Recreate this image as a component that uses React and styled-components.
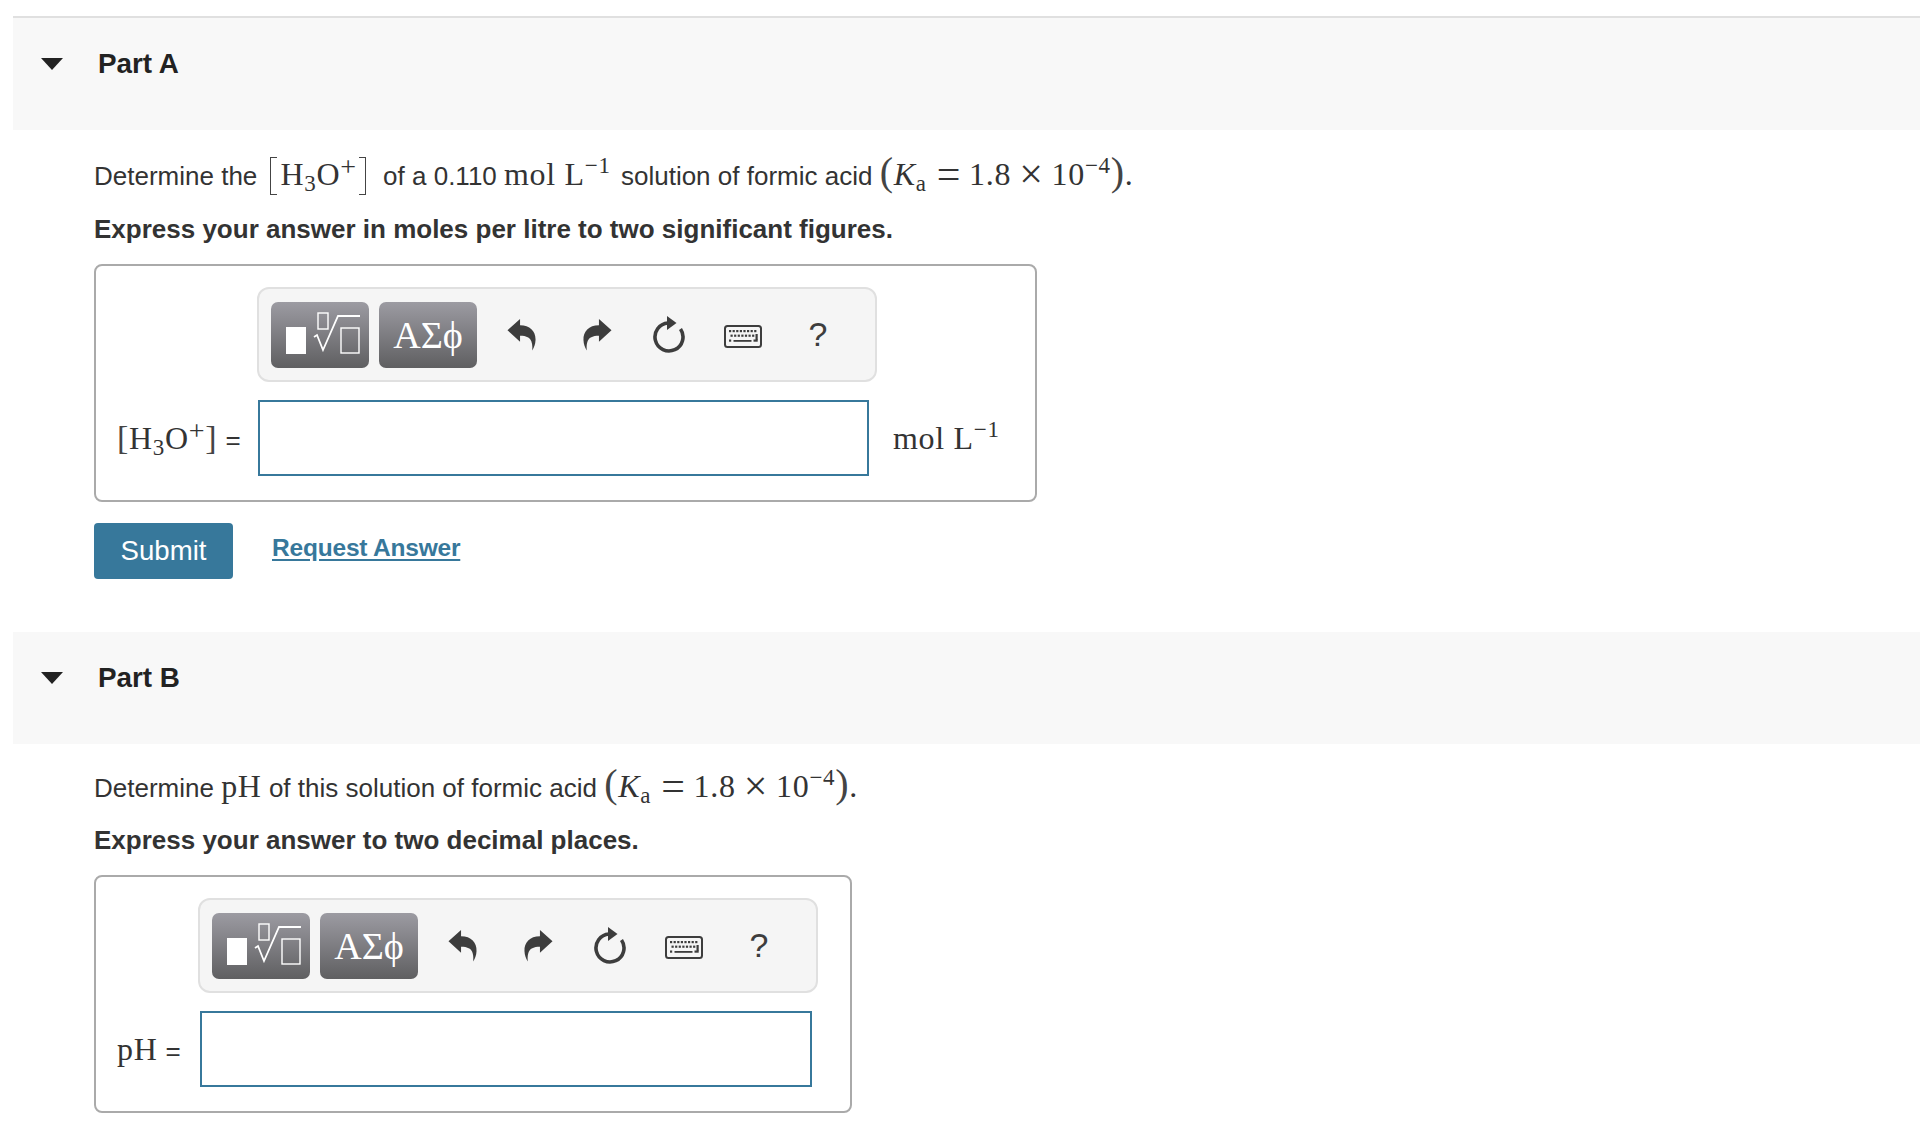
import React from 'react';
import styled, { createGlobalStyle } from 'styled-components';

const GlobalStyle = createGlobalStyle`
  body {
    margin: 0;
    background: #fff;
    font-family: "Liberation Sans", Arial, sans-serif;
    color: #333;
  }
`;

function UndoIcon({ flip }) {
  return (
    <svg width="29" height="33" viewBox="0 0 30 34" style={flip ? { transform: 'scaleX(-1)' } : undefined}>
      <path
        d="M0.5 12.5 L13.5 1 L13.5 7.5 C24 7.5 30 14 29.5 23 C29.3 27 28 31 26 33.5 C26.8 27 25.5 22 22 20 C19.5 18.6 16.5 18.2 13.5 18.2 L13.5 24.5 Z"
        fill="#3d3d3d"
      />
    </svg>
  );
}

function ResetIcon() {
  return (
    <svg width="34" height="38" viewBox="0 0 34 38">
      <path d="M16 7 A14 14 0 1 0 28.5 13" fill="none" stroke="#3d3d3d" strokeWidth="3.6" />
      <path d="M15 0 L24.5 7 L15 14 Z" fill="#3d3d3d" />
    </svg>
  );
}

function KeyboardIcon() {
  const top = [0, 1, 2, 3, 4, 5, 6, 7];
  return (
    <svg width="38" height="23" viewBox="0 0 38 23">
      <rect x="1" y="1" width="36" height="21" rx="2.5" fill="none" stroke="#3d3d3d" strokeWidth="2" />
      {top.map(i => <rect key={i} x={5 + i * 3.6} y="5" width="2.2" height="2.2" fill="#3d3d3d" />)}
      {top.slice(0, 7).map(i => <rect key={i} x={6.5 + i * 3.6} y="9.6" width="2.2" height="2.2" fill="#3d3d3d" />)}
      <rect x="31.5" y="9" width="2.2" height="6" fill="#3d3d3d" />
      <rect x="5" y="14.5" width="2.2" height="2.2" fill="#3d3d3d" />
      <rect x="9.5" y="15" width="18" height="1.8" fill="#3d3d3d" />
      <rect x="29.5" y="14.5" width="4.2" height="2.2" fill="#3d3d3d" />
    </svg>
  );
}

function TemplatesIcon() {
  return (
    <svg width="80" height="50" viewBox="0 0 80 50">
      <rect x="6" y="17" width="20" height="27" fill="#fff" />
      <rect x="38" y="3" width="10" height="16" fill="none" stroke="#fff" strokeWidth="1.4" />
      <path d="M34 27 L37 25 L43 40 L58 6 L80 6" fill="none" stroke="#fff" strokeWidth="1.8" />
      <rect x="61" y="18" width="18" height="25" fill="none" stroke="#fff" strokeWidth="1.4" />
    </svg>
  );
}

function Toolbar({ offset }) {
  return (
    <Tools $offset={offset}>
      <PaletteButton><TemplatesIcon /></PaletteButton>
      <PaletteButton>ΑΣϕ</PaletteButton>
      <IconSlot $width={69}><UndoIcon /></IconSlot>
      <IconSlot $width={82}><UndoIcon flip /></IconSlot>
      <IconSlot $width={62}><ResetIcon /></IconSlot>
      <IconSlot $width={86} $down={4}><KeyboardIcon /></IconSlot>
      <IconSlot $width={64}><Help>?</Help></IconSlot>
    </Tools>
  );
}

function Ka() {
  return (
    <MathText>
      <Paren>(</Paren><Italic>K</Italic><Sub $after={2}>a</Sub>
      <Op>=</Op>1.8<Op>×</Op>10<Sup>−4</Sup><Paren>)</Paren>.
    </MathText>
  );
}

function H3O({ big }) {
  return (
    <MathText>
      {big ? <BigBracket $side="left" /> : <Bracket>[</Bracket>}
      H<Sub>3</Sub>O<Plus>+</Plus>
      {big ? <BigBracket $side="right" /> : <Bracket>]</Bracket>}
    </MathText>
  );
}

export default function App() {
  return (
    <Page>
      <GlobalStyle />
      <Header>
        <Caret />
        <PartTitle>Part A</PartTitle>
      </Header>
      <Body>
        <Prompt $top={22}>
          Determine the&nbsp;<H3O big />&nbsp;of a 0.110&nbsp;<InlineMath>mol L<Sup>−1</Sup></InlineMath>&nbsp;solution of formic acid&nbsp;<Ka />
        </Prompt>
        <Instruction $top={17}>Express your answer in moles per litre to two significant figures.</Instruction>
        <AnswerBox $width={943}>
          <Toolbar offset={161} />
          <FieldRow>
            <FieldLabel $width={162}><H3O /><Equals>=</Equals></FieldLabel>
            <AnswerInput $width={611} />
            <Unit>mol L<Sup>−1</Sup></Unit>
          </FieldRow>
        </AnswerBox>
        <Actions>
          <Submit>Submit</Submit>
          <RequestLink href="#">Request Answer</RequestLink>
        </Actions>
      </Body>
      <Header $top={53}>
        <Caret />
        <PartTitle>Part B</PartTitle>
      </Header>
      <Body>
        <Prompt $top={20}>
          Determine&nbsp;<MathText>pH</MathText>&nbsp;of this solution of formic acid&nbsp;<Ka />
        </Prompt>
        <Instruction $top={16}>Express your answer to two decimal places.</Instruction>
        <AnswerBox $width={758}>
          <Toolbar offset={102} />
          <FieldRow>
            <FieldLabel $width={104}><MathText>pH</MathText><Equals>=</Equals></FieldLabel>
            <AnswerInput $width={612} />
          </FieldRow>
        </AnswerBox>
      </Body>
    </Page>
  );
}

const Page = styled.div`
  margin-left: 13px;
  padding-top: 16px;
  height: 1113px;
  overflow: hidden;
  &::before {
    content: '';
    display: block;
    height: 2px;
    background: #e0e0e0;
  }
`;

const Header = styled.div`
  display: flex;
  align-items: flex-start;
  height: 112px;
  margin-top: ${({ $top }) => $top || 0}px;
  padding: 30px 0 0 28px;
  box-sizing: border-box;
  background: #f8f8f8;
`;

const Caret = styled.div`
  width: 0;
  height: 0;
  margin-top: 10px;
  border-left: 11px solid transparent;
  border-right: 11px solid transparent;
  border-top: 12px solid #222;
`;

const PartTitle = styled.div`
  margin-left: 35px;
  font-size: 27.8px;
  line-height: 32px;
  font-weight: 700;
  color: #222;
`;

const Body = styled.div`
  padding-left: 81px;
`;

const Prompt = styled.div`
  display: flex;
  align-items: baseline;
  height: 44px;
  line-height: 44px;
  margin-top: ${({ $top }) => $top}px;
  font-size: 26px;
  white-space: nowrap;
`;

const Instruction = styled.div`
  height: 32px;
  line-height: 32px;
  margin-top: ${({ $top }) => $top}px;
  font-size: 26px;
  font-weight: 700;
`;

const MathText = styled.span`
  font-family: "Liberation Serif", "Times New Roman", serif;
  font-size: 32px;
  letter-spacing: 0.7px;
  white-space: nowrap;
`;

const InlineMath = styled(MathText)`
  margin-right: 3px;
`;

const Italic = styled.i`
  font-style: italic;
`;

const Sub = styled.sub`
  margin-right: ${({ $after }) => $after || 0}px;
  font-size: 23px;
  line-height: 0;
  vertical-align: -6px;
`;

const Sup = styled.sup`
  font-size: 23px;
  line-height: 0;
  vertical-align: 12px;
`;

const Plus = styled.sup`
  font-size: 28px;
  line-height: 0;
  vertical-align: 9px;
`;

const Op = styled.span`
  margin: 0 8px;
  font-size: 42px;
  line-height: 0;
  vertical-align: -3px;
`;

const Paren = styled.span`
  font-size: 40px;
  font-weight: 400;
  line-height: 0;
  color: #444;
`;

const Bracket = styled.span`
  font-size: 34px;
  font-weight: 300;
  line-height: 0;
  color: #444;
`;

const BigBracket = styled.span`
  display: inline-block;
  width: 7px;
  height: 38px;
  margin: ${({ $side }) => ($side === 'left' ? '0 4px 0 5px' : '0 10px 0 2px')};
  vertical-align: -10px;
  box-sizing: border-box;
  border: solid #444;
  border-width: 1.5px 0;
  ${({ $side }) => ($side === 'left' ? 'border-left-width: 1.5px;' : 'border-right-width: 1.5px;')}
`;

const AnswerBox = styled.div`
  width: ${({ $width }) => $width}px;
  height: 238px;
  margin-top: 19px;
  padding-top: 21px;
  box-sizing: border-box;
  border: 2px solid #aaa;
  border-radius: 8px;
`;

const Tools = styled.div`
  display: flex;
  align-items: center;
  width: 620px;
  height: 95px;
  margin-left: ${({ $offset }) => $offset}px;
  padding-left: 12px;
  box-sizing: border-box;
  background: #f5f5f5;
  border: 2px solid #e0e0e0;
  border-radius: 12px;
`;

const PaletteButton = styled.div`
  display: flex;
  align-items: center;
  justify-content: center;
  flex: none;
  width: 98px;
  height: 66px;
  margin-right: 10px;
  border-radius: 7px;
  background: linear-gradient(#9c9ba2, #5f5f61);
  color: #fff;
  font-family: "Liberation Serif", serif;
  font-size: 38px;
`;

const IconSlot = styled.div`
  display: flex;
  align-items: center;
  justify-content: center;
  flex: none;
  width: ${({ $width }) => $width}px;
  margin-top: ${({ $down }) => $down || 0}px;
`;

const Help = styled.span`
  font-size: 34px;
  color: #3d3d3d;
`;

const FieldRow = styled.div`
  display: flex;
  align-items: center;
  margin-top: 18px;
`;

const FieldLabel = styled.div`
  display: flex;
  align-items: baseline;
  flex: none;
  width: ${({ $width }) => $width}px;
  padding-left: 21px;
  box-sizing: border-box;
`;

const Equals = styled.span`
  margin-left: 8px;
  font-size: 26px;
`;

const AnswerInput = styled.div`
  flex: none;
  width: ${({ $width }) => $width}px;
  height: 76px;
  box-sizing: border-box;
  background: #fff;
  border: 2px solid #37789b;
`;

const Unit = styled(MathText)`
  margin-left: 24px;
`;

const Actions = styled.div`
  display: flex;
  align-items: flex-start;
  margin-top: 21px;
`;

const Submit = styled.button`
  width: 139px;
  height: 56px;
  padding: 0;
  border: 0;
  border-radius: 4px;
  background: #37789b;
  color: #fff;
  font-family: inherit;
  font-size: 27.6px;
`;

const RequestLink = styled.a`
  margin: 9px 0 0 39px;
  font-size: 24.5px;
  letter-spacing: -0.2px;
  line-height: 32px;
  font-weight: 700;
  color: #37789b;
  text-underline-offset: 3px;
`;
